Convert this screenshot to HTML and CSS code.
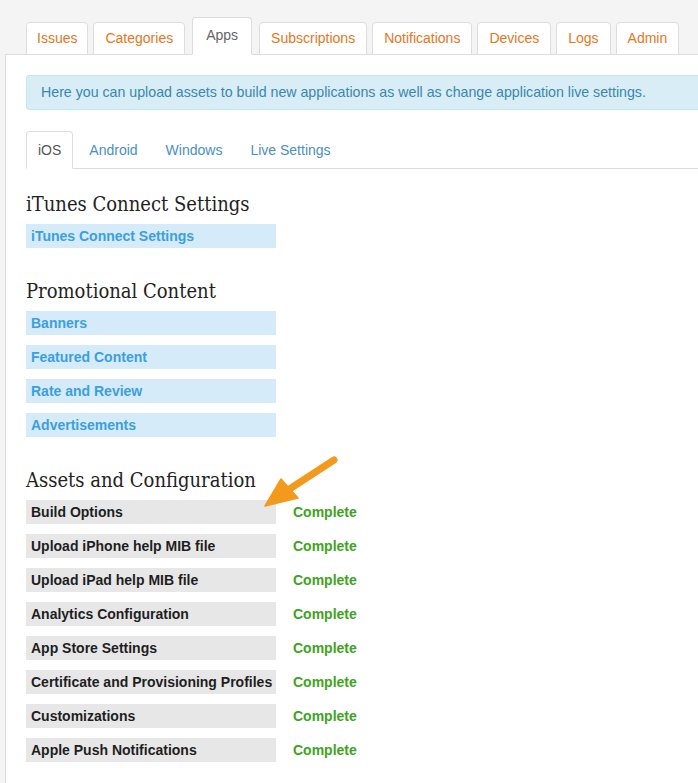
FILE: index.html
```html
<!DOCTYPE html>
<html lang="en">
  <head>
    <meta charset="UTF-8" />
    <title>Apps</title>
    <link rel="stylesheet" href="styles.css">
  </head>
  <body>
    <ul class="main-tabs">
      <li><a href="#">Issues</a></li>
      <li><a href="#">Categories</a></li>
      <li class="active"><a href="#">Apps</a></li>
      <li><a href="#">Subscriptions</a></li>
      <li><a href="#">Notifications</a></li>
      <li><a href="#">Devices</a></li>
      <li><a href="#">Logs</a></li>
      <li><a href="#">Admin</a></li>
    </ul>

    <div class="panel">
      <div class="alert">Here you can upload assets to build new applications as well as change application live settings.</div>

      <ul class="sub-tabs">
        <li class="active"><a href="#">iOS</a></li>
        <li><a href="#">Android</a></li>
        <li><a href="#">Windows</a></li>
        <li><a href="#">Live Settings</a></li>
      </ul>

      <div class="section">
        <h2>iTunes Connect Settings</h2>
        <div class="list">
          <a class="link" href="#">iTunes Connect Settings</a>
        </div>
      </div>

      <div class="section">
        <h2>Promotional Content</h2>
        <div class="list">
          <a class="link" href="#">Banners</a>
          <a class="link" href="#">Featured Content</a>
          <a class="link" href="#">Rate and Review</a>
          <a class="link" href="#">Advertisements</a>
        </div>
      </div>

      <div class="section assets">
        <h2>Assets and Configuration</h2>
        <div class="list">
          <div class="row"><span class="item">Build Options</span><span class="status">Complete</span></div>
          <div class="row"><span class="item">Upload iPhone help MIB file</span><span class="status">Complete</span></div>
          <div class="row"><span class="item">Upload iPad help MIB file</span><span class="status">Complete</span></div>
          <div class="row"><span class="item">Analytics Configuration</span><span class="status">Complete</span></div>
          <div class="row"><span class="item">App Store Settings</span><span class="status">Complete</span></div>
          <div class="row"><span class="item">Certificate and Provisioning Profiles</span><span class="status">Complete</span></div>
          <div class="row"><span class="item">Customizations</span><span class="status">Complete</span></div>
          <div class="row"><span class="item">Apple Push Notifications</span><span class="status">Complete</span></div>
        </div>

        <!-- callout arrow pointing at Build Options -->
        <svg class="arrow" width="90" height="64" viewBox="0 0 90 64">
          <path d="M79 10 L33 40" stroke="#f39a1d" stroke-width="7" stroke-linecap="round" fill="none" />
          <path d="M10 56 L26 29 L43 48 Z" fill="#f39a1d" stroke="#f39a1d" stroke-width="1.5" stroke-linejoin="round" />
        </svg>
      </div>
    </div>
  </body>
</html>
```

FILE: styles.css
```css
body {
  margin: 0;
  padding-top: 17px;
  background: #f4f4f4;
  font-family: "Liberation Sans", Arial, sans-serif;
  font-size: 14px;
  color: #333;
  overflow: hidden;
}

a {
  text-decoration: none;
}

ul {
  list-style: none;
  margin: 0;
  padding: 0;
}

/* top level tabs */
.main-tabs {
  display: flex;
  align-items: flex-end;
  gap: 5px;
  padding-left: 26px;
  margin-bottom: -1px;
  position: relative;
}

.main-tabs li a {
  display: block;
  height: 31px;
  line-height: 30px;
  padding: 0 11px;
  color: #e8761d;
  background: #fff;
  border: 1px solid #ddd;
  border-radius: 4px 4px 0 0;
}

.main-tabs li:first-child a {
  padding: 0 10px;
}

.main-tabs li.active {
  margin: 0 2px;
}

.main-tabs li.active a {
  height: 36px;
  line-height: 34px;
  padding: 0 13px;
  color: #666;
  border-bottom-color: #fff;
}

.panel {
  margin-left: 5px;
  height: calc(100vh - 53px);
  box-sizing: border-box;
  overflow: hidden;
  background: #fff;
  border-left: 1px solid #ddd;
  border-top: 1px solid #ddd;
  padding: 20px 0 0 20px;
}

.alert {
  background: #d9edf7;
  border: 1px solid #bce8f1;
  border-right: none;
  border-radius: 4px 0 0 4px;
  color: #3a87ad;
  padding: 7px 14px;
  line-height: 19px;
  font-size: 14.2px;
}

/* platform tabs */
.sub-tabs {
  display: flex;
  margin-top: 21px;
  border-bottom: 1px solid #ddd;
}

.sub-tabs li {
  margin-right: 4px;
  margin-bottom: -1px;
}

.sub-tabs li a {
  display: block;
  padding: 8px 11px;
  line-height: 20px;
  color: #4a90c6;
  border: 1px solid transparent;
  border-radius: 4px 4px 0 0;
}

.sub-tabs li.active a {
  color: #555;
  background: #fff;
  border-color: #ddd #ddd transparent;
}

.section {
  margin-top: 30px;
}

.sub-tabs + .section {
  margin-top: 22px;
}

h2 {
  font-family: "DejaVu Serif Condensed", "DejaVu Serif", Georgia, serif;
  font-weight: normal;
  font-size: 20px;
  color: #222;
  margin: 0 0 7px;
  line-height: 26px;
}

.list {
  display: flex;
  flex-direction: column;
  gap: 10px;
}

.row {
  display: flex;
  align-items: center;
}

.link,
.item {
  display: block;
  width: 250px;
  height: 24px;
  line-height: 24px;
  padding-left: 5px;
  box-sizing: border-box;
  font-weight: bold;
}

.link {
  background: #d5ebf9;
  color: #3b9fe2;
}

.item {
  background: #e7e7e7;
  color: #1e1e1e;
}

.status {
  margin-left: 17px;
  font-weight: bold;
  color: #3ea31f;
}

.assets {
  position: relative;
}

.arrow {
  position: absolute;
  left: 229px;
  top: -17px;
}
```
